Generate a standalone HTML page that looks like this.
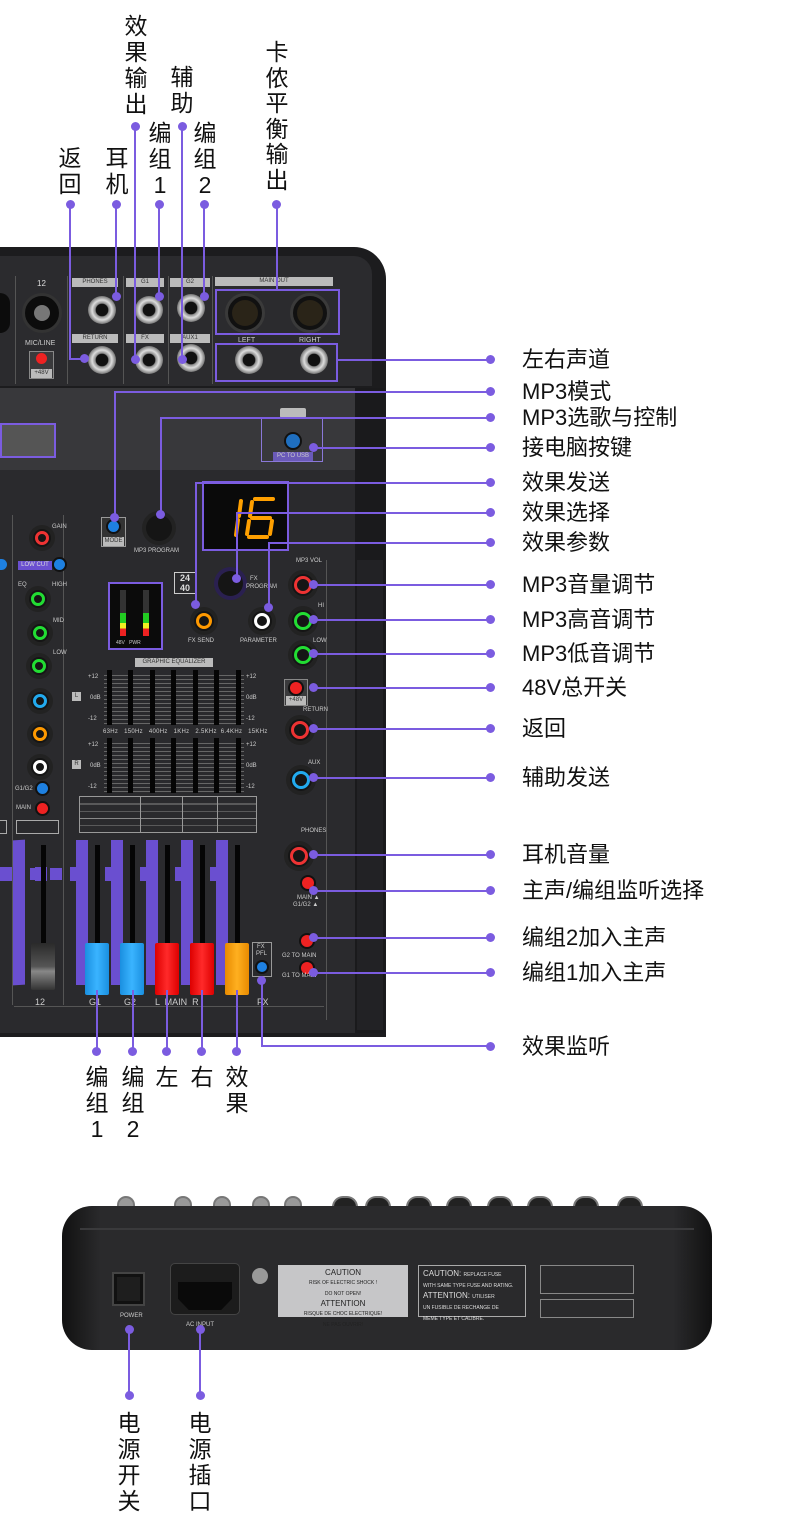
<!DOCTYPE html>
<html><head><meta charset="utf-8">
<style>
*{margin:0;padding:0;box-sizing:border-box}
body{width:790px;height:1540px;background:#fff;position:relative;overflow:hidden;font-family:"Liberation Sans","Noto Sans CJK SC",sans-serif}
.a{position:absolute}
.lbl{position:absolute;left:522px;font-size:22px;color:#111;line-height:26px;white-space:nowrap}
.v{position:absolute;font-size:23px;color:#111;line-height:26px;width:26px;text-align:center}
.hl{position:absolute;height:2px;background:#7b5ce0}
.vl{position:absolute;width:2px;background:#7b5ce0}
.dot{position:absolute;width:9px;height:9px;border-radius:50%;background:#7b5ce0}
.knob{position:absolute;border-radius:50%;background:#151515;box-shadow:0 0 0 4px #222}
.ring{position:absolute;border-radius:50%;border:3px solid}
.jack{position:absolute;border-radius:50%;background:radial-gradient(circle,#111 30%,#8a8a8a 34%,#ddd 50%,#777 70%,#444 75%)}
.t{position:absolute;color:#ccc;font-size:6px;white-space:nowrap}
.tag{position:absolute;background:#bbb;color:#333;font-size:6px;text-align:center;line-height:9px;height:9px}
.pb{position:absolute;border:2px solid #7b5ce0}
.cap{position:absolute;width:24px;height:52px;border-radius:2px}
.fd{position:absolute;width:5px;background:#050505}
.pbar{position:absolute;width:12px;background:#6a4fd0}
.rj{position:absolute;top:1196px;width:22px;height:14px;border-radius:11px 11px 0 0;background:#444;border:2px solid #777;border-bottom:0}
</style></head><body>

<!-- MIXER BODY -->
<div class="a" style="left:0;top:247px;width:386px;height:790px;background:#1c1c1e;border-top-right-radius:32px"></div>
<div class="a" style="left:0;top:256px;width:372px;height:130px;background:#2b2b2e;border-top-right-radius:18px"></div>
<div class="a" style="left:0;top:388px;width:355px;height:82px;background:#38383b"></div>
<div class="a" style="left:0;top:470px;width:355px;height:563px;background:#2a2a2d"></div>
<div class="a" style="left:355px;top:388px;width:30px;height:645px;background:#1a1a1c"></div>
<div class="a" style="left:357px;top:560px;width:26px;height:470px;background:#222225"></div>
<div class="a" style="left:326px;top:560px;width:1px;height:460px;background:#555"></div>

<!-- top panel details -->
<div class="a" style="left:15px;top:276px;width:1px;height:108px;background:#555"></div>
<div class="a" style="left:67px;top:276px;width:1px;height:108px;background:#555"></div>
<div class="a" style="left:123px;top:276px;width:1px;height:108px;background:#555"></div>
<div class="a" style="left:168px;top:276px;width:1px;height:108px;background:#555"></div>
<div class="a" style="left:212px;top:276px;width:1px;height:108px;background:#555"></div>
<div class="tag" style="left:20px;top:279px;width:43px;background:none;color:#ddd;font-size:8px">12</div>
<div class="a" style="left:22px;top:293px;width:40px;height:40px;border-radius:50%;background:#0c0c0c;border:3px solid #333"></div>
<div class="a" style="left:34px;top:305px;width:16px;height:16px;border-radius:50%;background:#777"></div>
<div class="a" style="left:0;top:293px;width:10px;height:40px;border-radius:0 20px 20px 0;background:#0c0c0c"></div>
<div class="t" style="left:25px;top:340px;font-size:7px">MIC/LINE</div>
<div class="a" style="left:29px;top:351px;width:25px;height:28px;background:#3a3a3c;border:1px solid #888"></div>
<div class="a" style="left:36px;top:353px;width:11px;height:11px;border-radius:50%;background:#e22"></div>
<div class="tag" style="left:31px;top:369px;width:21px">+48V</div>
<div class="tag" style="left:72px;top:278px;width:46px">PHONES</div>
<div class="tag" style="left:72px;top:334px;width:46px">RETURN</div>
<div class="tag" style="left:126px;top:278px;width:38px">G1</div>
<div class="tag" style="left:126px;top:334px;width:38px">FX</div>
<div class="tag" style="left:170px;top:278px;width:40px">G2</div>
<div class="tag" style="left:170px;top:334px;width:40px">AUX1</div>
<div class="tag" style="left:215px;top:277px;width:118px">MAIN OUT</div>
<div class="jack" style="left:88px;top:296px;width:28px;height:28px"></div>
<div class="jack" style="left:88px;top:346px;width:28px;height:28px"></div>
<div class="jack" style="left:135px;top:296px;width:28px;height:28px"></div>
<div class="jack" style="left:135px;top:346px;width:28px;height:28px"></div>
<div class="jack" style="left:177px;top:294px;width:28px;height:28px"></div>
<div class="jack" style="left:177px;top:344px;width:28px;height:28px"></div>
<div class="a" style="left:225px;top:293px;width:40px;height:40px;border-radius:50%;background:#111;border:3px solid #3a3a3a"></div>
<div class="a" style="left:232px;top:300px;width:26px;height:26px;border-radius:50%;background:#2a2418"></div>
<div class="a" style="left:290px;top:293px;width:40px;height:40px;border-radius:50%;background:#111;border:3px solid #3a3a3a"></div>
<div class="a" style="left:297px;top:300px;width:26px;height:26px;border-radius:50%;background:#2a2418"></div>
<div class="t" style="left:238px;top:337px;font-size:7px">LEFT</div>
<div class="t" style="left:299px;top:337px;font-size:7px">RIGHT</div>
<div class="jack" style="left:235px;top:346px;width:28px;height:28px"></div>
<div class="jack" style="left:300px;top:346px;width:28px;height:28px"></div>
<div class="pb" style="left:215px;top:289px;width:125px;height:46px"></div>
<div class="pb" style="left:215px;top:343px;width:123px;height:39px"></div>

<!-- upper gray section -->
<div class="a" style="left:0;top:423px;width:56px;height:35px;background:#555;border:2px solid #7b5ce0"></div>
<div class="a" style="left:280px;top:408px;width:26px;height:10px;background:#bbb;border-radius:2px"></div>
<div class="a" style="left:261px;top:417px;width:62px;height:45px;border:1px solid #8a78d8"></div>
<div class="a" style="left:286px;top:434px;width:14px;height:14px;border-radius:50%;background:#1f6fc0;box-shadow:0 0 0 2px #111"></div>
<div class="tag" style="left:273px;top:452px;width:40px;background:#6a5ab8;color:#ccc">PC TO USB</div>

<!-- MODE / MP3 program -->
<div class="a" style="left:101px;top:517px;width:25px;height:30px;background:#333;border:1px solid #999"></div>
<div class="a" style="left:108px;top:521px;width:11px;height:11px;border-radius:50%;background:#1e80e0;box-shadow:0 0 0 2px #111"></div>
<div class="tag" style="left:103px;top:537px;width:21px">MODE</div>
<div class="knob" style="left:146px;top:515px;width:26px;height:26px"></div>
<div class="t" style="left:134px;top:548px">MP3 PROGRAM</div>

<!-- display -->
<div class="a" style="left:202px;top:481px;width:87px;height:70px;border:2px solid #7b5ce0;background:#0a0a0a"></div>
<svg class="a" style="left:202px;top:481px" width="87" height="70" viewBox="0 0 87 70">
<g stroke="#ffa000" stroke-width="4" stroke-linecap="round" fill="none">
<line x1="39" y1="20" x2="37" y2="35"/><line x1="36" y1="39" x2="34" y2="54"/>
<line x1="53" y1="18" x2="71" y2="18"/><line x1="50" y1="21" x2="48" y2="35"/>
<line x1="50" y1="37" x2="68" y2="37"/><line x1="47" y1="40" x2="45" y2="53"/>
<line x1="47" y1="56" x2="65" y2="56"/><line x1="70" y1="40" x2="68" y2="53"/>
</g></svg>
<div class="a" style="left:174px;top:572px;width:22px;height:22px;border:1px solid #ccc;color:#ddd;font-size:9px;font-weight:bold;line-height:10px;text-align:center">24<br>40</div>
<div class="knob" style="left:218px;top:571px;width:25px;height:25px;box-shadow:0 0 0 4px #2a2050"></div>
<div class="t" style="left:250px;top:576px">FX</div>
<div class="t" style="left:246px;top:584px">PROGRAM</div>
<div class="knob" style="left:194px;top:611px;width:20px;height:20px"></div>
<div class="ring" style="left:196px;top:613px;width:16px;height:16px;border-color:#f90"></div>
<div class="t" style="left:188px;top:638px">FX SEND</div>
<div class="knob" style="left:252px;top:611px;width:20px;height:20px"></div>
<div class="ring" style="left:254px;top:613px;width:16px;height:16px;border-color:#fff"></div>
<div class="t" style="left:240px;top:638px">PARAMETER</div>

<!-- meter -->
<div class="a" style="left:108px;top:582px;width:55px;height:68px;border:2px solid #7b5ce0;background:#0b0b0b"></div>
<div class="a" style="left:120px;top:590px;width:6px;height:46px;background:linear-gradient(#333 0,#333 50%,#2c2 50%,#2c2 72%,#ee2 72%,#ee2 84%,#e22 84%)"></div>
<div class="a" style="left:143px;top:590px;width:6px;height:46px;background:linear-gradient(#333 0,#333 50%,#2c2 50%,#2c2 72%,#ee2 72%,#ee2 84%,#e22 84%)"></div>
<div class="t" style="left:116px;top:640px;font-size:5px">48V &nbsp; PWR</div>

<!-- right knobs -->
<div class="t" style="left:296px;top:558px">MP3 VOL</div>
<div class="knob" style="left:292px;top:574px;width:22px;height:22px"></div>
<div class="ring" style="left:294px;top:576px;width:18px;height:18px;border-color:#e33"></div>
<div class="t" style="left:318px;top:603px">HI</div>
<div class="knob" style="left:292px;top:610px;width:22px;height:22px"></div>
<div class="ring" style="left:294px;top:612px;width:18px;height:18px;border-color:#2d3"></div>
<div class="t" style="left:313px;top:638px">LOW</div>
<div class="knob" style="left:292px;top:644px;width:22px;height:22px"></div>
<div class="ring" style="left:294px;top:646px;width:18px;height:18px;border-color:#2d3"></div>
<div class="a" style="left:284px;top:679px;width:24px;height:27px;background:#3a3a3c;border:1px solid #888"></div>
<div class="a" style="left:290px;top:682px;width:12px;height:12px;border-radius:50%;background:#e22;box-shadow:0 0 0 2px #111"></div>
<div class="tag" style="left:286px;top:696px;width:20px">+48V</div>
<div class="t" style="left:303px;top:707px">RETURN</div>
<div class="knob" style="left:289px;top:719px;width:22px;height:22px"></div>
<div class="ring" style="left:291px;top:721px;width:18px;height:18px;border-color:#e33"></div>
<div class="t" style="left:308px;top:760px">AUX</div>
<div class="knob" style="left:290px;top:769px;width:22px;height:22px"></div>
<div class="ring" style="left:292px;top:771px;width:18px;height:18px;border-color:#2ae"></div>
<div class="t" style="left:301px;top:828px">PHONES</div>
<div class="knob" style="left:288px;top:845px;width:22px;height:22px"></div>
<div class="ring" style="left:290px;top:847px;width:18px;height:18px;border-color:#e33"></div>
<div class="a" style="left:302px;top:877px;width:12px;height:12px;border-radius:50%;background:#e22;box-shadow:0 0 0 2px #111"></div>
<div class="t" style="left:297px;top:895px">MAIN ▲</div>
<div class="t" style="left:293px;top:902px">G1/G2 ▲</div>
<div class="a" style="left:301px;top:935px;width:12px;height:12px;border-radius:50%;background:#e22;box-shadow:0 0 0 2px #111"></div>
<div class="t" style="left:282px;top:953px">G2 TO MAIN</div>
<div class="a" style="left:301px;top:962px;width:12px;height:12px;border-radius:50%;background:#e22;box-shadow:0 0 0 2px #111"></div>
<div class="t" style="left:282px;top:973px">G1 TO MAIN</div>

<!-- left channel knobs -->
<div class="a" style="left:12px;top:515px;width:1px;height:490px;background:#555"></div>
<div class="a" style="left:63px;top:515px;width:1px;height:490px;background:#555"></div>
<div class="t" style="left:52px;top:524px">GAIN</div>
<div class="knob" style="left:33px;top:529px;width:18px;height:18px"></div>
<div class="ring" style="left:35px;top:531px;width:14px;height:14px;border-color:#e33"></div>
<div class="tag" style="left:18px;top:561px;width:34px;background:#6a4fd0;color:#ddd">LOW CUT</div>
<div class="a" style="left:54px;top:559px;width:11px;height:11px;border-radius:50%;background:#1e80e0;box-shadow:0 0 0 2px #111"></div>
<div class="a" style="left:0;top:559px;width:7px;height:11px;border-radius:0 6px 6px 0;background:#1e80e0"></div>
<div class="t" style="left:18px;top:582px">EQ</div><div class="t" style="left:52px;top:582px">HIGH</div>
<div class="knob" style="left:29px;top:590px;width:18px;height:18px"></div>
<div class="ring" style="left:31px;top:592px;width:14px;height:14px;border-color:#2d3"></div>
<div class="t" style="left:53px;top:618px">MID</div>
<div class="knob" style="left:31px;top:624px;width:18px;height:18px"></div>
<div class="ring" style="left:33px;top:626px;width:14px;height:14px;border-color:#2d3"></div>
<div class="t" style="left:53px;top:650px">LOW</div>
<div class="knob" style="left:30px;top:657px;width:18px;height:18px"></div>
<div class="ring" style="left:32px;top:659px;width:14px;height:14px;border-color:#2d3"></div>
<div class="knob" style="left:31px;top:692px;width:18px;height:18px"></div>
<div class="ring" style="left:33px;top:694px;width:14px;height:14px;border-color:#2ae"></div>
<div class="knob" style="left:31px;top:725px;width:18px;height:18px"></div>
<div class="ring" style="left:33px;top:727px;width:14px;height:14px;border-color:#f90"></div>
<div class="knob" style="left:31px;top:758px;width:18px;height:18px"></div>
<div class="ring" style="left:33px;top:760px;width:14px;height:14px;border-color:#fff"></div>
<div class="t" style="left:15px;top:786px">G1/G2</div>
<div class="a" style="left:37px;top:783px;width:11px;height:11px;border-radius:50%;background:#1e80e0;box-shadow:0 0 0 2px #111"></div>
<div class="t" style="left:16px;top:805px">MAIN</div>
<div class="a" style="left:37px;top:803px;width:11px;height:11px;border-radius:50%;background:#e22;box-shadow:0 0 0 2px #111"></div>
<div class="a" style="left:16px;top:820px;width:43px;height:14px;border:1px solid #aaa"></div>
<div class="a" style="left:0;top:820px;width:7px;height:14px;border:1px solid #aaa;border-left:0"></div>

<!-- EQ -->
<div class="tag" style="left:135px;top:658px;width:78px">GRAPHIC EQUALIZER</div>
<div class="tag" style="left:72px;top:692px;width:9px;height:9px">L</div>
<div class="tag" style="left:72px;top:760px;width:9px;height:9px">R</div>
<div class="t" style="left:88px;top:674px">+12</div><div class="t" style="left:90px;top:695px">0dB</div><div class="t" style="left:88px;top:716px">-12</div>
<div class="t" style="left:246px;top:674px">+12</div><div class="t" style="left:246px;top:695px">0dB</div><div class="t" style="left:246px;top:716px">-12</div>
<div class="t" style="left:88px;top:742px">+12</div><div class="t" style="left:90px;top:763px">0dB</div><div class="t" style="left:88px;top:784px">-12</div>
<div class="t" style="left:246px;top:742px">+12</div><div class="t" style="left:246px;top:763px">0dB</div><div class="t" style="left:246px;top:784px">-12</div>
<div class="a" style="left:104px;top:672px;width:140px;height:52px;background:repeating-linear-gradient(#2a2a2d 0 3px,#666 3px 4px)"></div>
<div class="a" style="left:104px;top:740px;width:140px;height:52px;background:repeating-linear-gradient(#2a2a2d 0 3px,#666 3px 4px)"></div>
<div class="fd" style="left:107px;top:670px;height:55px"></div><div class="fd" style="left:128px;top:670px;height:55px"></div><div class="fd" style="left:150px;top:670px;height:55px"></div><div class="fd" style="left:171px;top:670px;height:55px"></div><div class="fd" style="left:193px;top:670px;height:55px"></div><div class="fd" style="left:214px;top:670px;height:55px"></div><div class="fd" style="left:236px;top:670px;height:55px"></div>
<div class="fd" style="left:107px;top:738px;height:55px"></div><div class="fd" style="left:128px;top:738px;height:55px"></div><div class="fd" style="left:150px;top:738px;height:55px"></div><div class="fd" style="left:171px;top:738px;height:55px"></div><div class="fd" style="left:193px;top:738px;height:55px"></div><div class="fd" style="left:214px;top:738px;height:55px"></div><div class="fd" style="left:236px;top:738px;height:55px"></div>
<div class="t" style="left:103px;top:729px;letter-spacing:0.3px">63Hz &nbsp; 150Hz &nbsp; 400Hz &nbsp; 1KHz &nbsp; 2.5KHz &nbsp;6.4KHz &nbsp; 15KHz</div>
<div class="a" style="left:79px;top:796px;width:178px;height:37px;border:1px solid #999;background:repeating-linear-gradient(#2a2a2d 0 6.5px,#888 6.5px 7.3px)"></div>
<div class="a" style="left:140px;top:796px;width:1px;height:37px;background:#999"></div>
<div class="a" style="left:182px;top:796px;width:1px;height:37px;background:#999"></div>
<div class="a" style="left:217px;top:796px;width:1px;height:37px;background:#999"></div>

<!-- faders -->
<div class="pbar" style="left:13px;top:840px;height:145px;transform:skewY(-4deg)"></div>
<div class="pbar" style="left:76px;top:840px;height:145px"></div><div class="pbar" style="left:111px;top:840px;height:145px"></div><div class="pbar" style="left:146px;top:840px;height:145px"></div><div class="pbar" style="left:181px;top:840px;height:145px"></div><div class="pbar" style="left:216px;top:840px;height:145px"></div>
<div class="a" style="left:0;top:867px;width:245px;height:14px;background:repeating-linear-gradient(90deg,#6a4fd0 0 12px,transparent 12px 35px)"></div>
<div class="a" style="left:30px;top:868px;width:10px;height:12px;background:#6a4fd0"></div><div class="a" style="left:50px;top:868px;width:12px;height:12px;background:#6a4fd0"></div>
<div class="fd" style="left:41px;top:845px;height:125px"></div>
<div class="fd" style="left:95px;top:845px;height:100px"></div><div class="fd" style="left:130px;top:845px;height:100px"></div><div class="fd" style="left:165px;top:845px;height:100px"></div><div class="fd" style="left:200px;top:845px;height:100px"></div><div class="fd" style="left:235px;top:845px;height:100px"></div>
<div class="cap" style="left:31px;top:943px;width:24px;height:47px;background:linear-gradient(#2a2a2a,#555 50%,#888 60%,#333)"></div>
<div class="cap" style="left:85px;top:943px;background:linear-gradient(90deg,#1a8fe0,#3ab4ff 50%,#1a8fe0)"></div>
<div class="cap" style="left:120px;top:943px;background:linear-gradient(90deg,#1a8fe0,#3ab4ff 50%,#1a8fe0)"></div>
<div class="cap" style="left:155px;top:943px;background:linear-gradient(90deg,#d00,#ff2a2a 50%,#d00)"></div>
<div class="cap" style="left:190px;top:943px;background:linear-gradient(90deg,#d00,#ff2a2a 50%,#d00)"></div>
<div class="cap" style="left:225px;top:943px;background:linear-gradient(90deg,#e88a00,#ffb020 50%,#e88a00)"></div>
<div class="a" style="left:252px;top:942px;width:20px;height:35px;border:1px solid #999"></div>
<div class="t" style="left:257px;top:944px">FX</div><div class="t" style="left:256px;top:951px">PFL</div>
<div class="a" style="left:257px;top:962px;width:10px;height:10px;border-radius:50%;background:#1e80e0;box-shadow:0 0 0 2px #111"></div>
<div class="t" style="left:35px;top:997px;font-size:9px">12</div>
<div class="t" style="left:89px;top:997px;font-size:9px">G1</div>
<div class="t" style="left:124px;top:997px;font-size:9px">G2</div>
<div class="t" style="left:155px;top:997px;font-size:9px">L &nbsp;MAIN &nbsp;R</div>
<div class="t" style="left:257px;top:997px;font-size:9px">FX</div>
<div class="a" style="left:14px;top:1006px;width:310px;height:1px;background:#555"></div>

<!-- RIGHT LABELS & LINES -->
<div class="hl" style="left:338px;top:359px;width:152px"></div>
<div class="hl" style="left:114px;top:391px;width:376px"></div><div class="vl" style="left:114px;top:391px;height:127px"></div>
<div class="hl" style="left:160px;top:417px;width:330px"></div><div class="vl" style="left:160px;top:417px;height:97px"></div>
<div class="hl" style="left:313px;top:447px;width:177px"></div>
<div class="hl" style="left:195px;top:482px;width:295px"></div><div class="vl" style="left:195px;top:482px;height:122px"></div>
<div class="hl" style="left:236px;top:512px;width:254px"></div><div class="vl" style="left:236px;top:512px;height:66px"></div>
<div class="hl" style="left:268px;top:542px;width:222px"></div><div class="vl" style="left:268px;top:542px;height:65px"></div>
<div class="hl" style="left:313px;top:584px;width:177px"></div>
<div class="hl" style="left:313px;top:619px;width:177px"></div>
<div class="hl" style="left:313px;top:653px;width:177px"></div>
<div class="hl" style="left:313px;top:687px;width:177px"></div>
<div class="hl" style="left:313px;top:728px;width:177px"></div>
<div class="hl" style="left:313px;top:777px;width:177px"></div>
<div class="hl" style="left:313px;top:854px;width:177px"></div>
<div class="hl" style="left:313px;top:890px;width:177px"></div>
<div class="hl" style="left:313px;top:937px;width:177px"></div>
<div class="hl" style="left:313px;top:972px;width:177px"></div>
<div class="vl" style="left:261px;top:980px;height:67px"></div><div class="hl" style="left:261px;top:1045px;width:229px"></div>
<div class="dot" style="left:486px;top:355px"></div><div class="dot" style="left:486px;top:387px"></div><div class="dot" style="left:486px;top:413px"></div><div class="dot" style="left:486px;top:443px"></div><div class="dot" style="left:486px;top:478px"></div><div class="dot" style="left:486px;top:508px"></div><div class="dot" style="left:486px;top:538px"></div><div class="dot" style="left:486px;top:580px"></div><div class="dot" style="left:486px;top:615px"></div><div class="dot" style="left:486px;top:649px"></div><div class="dot" style="left:486px;top:683px"></div><div class="dot" style="left:486px;top:724px"></div><div class="dot" style="left:486px;top:773px"></div><div class="dot" style="left:486px;top:850px"></div><div class="dot" style="left:486px;top:886px"></div><div class="dot" style="left:486px;top:933px"></div><div class="dot" style="left:486px;top:968px"></div><div class="dot" style="left:486px;top:1042px"></div>
<div class="dot" style="left:110px;top:513px"></div><div class="dot" style="left:156px;top:510px"></div><div class="dot" style="left:309px;top:443px"></div><div class="dot" style="left:191px;top:600px"></div><div class="dot" style="left:232px;top:574px"></div><div class="dot" style="left:264px;top:603px"></div>
<div class="dot" style="left:309px;top:580px"></div><div class="dot" style="left:309px;top:615px"></div><div class="dot" style="left:309px;top:649px"></div><div class="dot" style="left:309px;top:683px"></div><div class="dot" style="left:309px;top:724px"></div><div class="dot" style="left:309px;top:773px"></div><div class="dot" style="left:309px;top:850px"></div><div class="dot" style="left:309px;top:886px"></div><div class="dot" style="left:309px;top:933px"></div><div class="dot" style="left:309px;top:968px"></div><div class="dot" style="left:257px;top:976px"></div>

<div class="lbl" style="top:347px">左右声道</div>
<div class="lbl" style="top:379px">MP3模式</div>
<div class="lbl" style="top:405px">MP3选歌与控制</div>
<div class="lbl" style="top:435px">接电脑按键</div>
<div class="lbl" style="top:470px">效果发送</div>
<div class="lbl" style="top:500px">效果选择</div>
<div class="lbl" style="top:530px">效果参数</div>
<div class="lbl" style="top:572px">MP3音量调节</div>
<div class="lbl" style="top:607px">MP3高音调节</div>
<div class="lbl" style="top:641px">MP3低音调节</div>
<div class="lbl" style="top:675px">48V总开关</div>
<div class="lbl" style="top:716px">返回</div>
<div class="lbl" style="top:765px">辅助发送</div>
<div class="lbl" style="top:842px">耳机音量</div>
<div class="lbl" style="top:878px">主声/编组监听选择</div>
<div class="lbl" style="top:925px">编组2加入主声</div>
<div class="lbl" style="top:960px">编组1加入主声</div>
<div class="lbl" style="top:1034px">效果监听</div>

<!-- TOP LABELS -->
<div class="v" style="left:57px;top:145px">返回</div>
<div class="v" style="left:104px;top:145px">耳机</div>
<div class="v" style="left:123px;top:13px">效果输出</div>
<div class="v" style="left:147px;top:120px">编组1</div>
<div class="v" style="left:169px;top:64px">辅助</div>
<div class="v" style="left:192px;top:120px">编组2</div>
<div class="v" style="left:264px;top:40px;line-height:25.5px">卡侬平衡输出</div>
<div class="dot" style="left:66px;top:200px"></div><div class="vl" style="left:69px;top:204px;height:155px"></div><div class="hl" style="left:69px;top:358px;width:15px"></div><div class="dot" style="left:80px;top:354px"></div>
<div class="dot" style="left:112px;top:200px"></div><div class="vl" style="left:115px;top:204px;height:92px"></div><div class="dot" style="left:112px;top:292px"></div>
<div class="dot" style="left:131px;top:122px"></div><div class="vl" style="left:134px;top:126px;height:233px"></div><div class="dot" style="left:131px;top:355px"></div>
<div class="dot" style="left:155px;top:200px"></div><div class="vl" style="left:158px;top:204px;height:92px"></div><div class="dot" style="left:155px;top:292px"></div>
<div class="dot" style="left:178px;top:122px"></div><div class="vl" style="left:181px;top:126px;height:233px"></div><div class="dot" style="left:178px;top:355px"></div>
<div class="dot" style="left:200px;top:200px"></div><div class="vl" style="left:203px;top:204px;height:92px"></div><div class="dot" style="left:200px;top:292px"></div>
<div class="dot" style="left:272px;top:200px"></div><div class="vl" style="left:276px;top:204px;height:86px"></div>

<!-- BOTTOM FADER LABELS -->
<div class="vl" style="left:96px;top:990px;height:60px"></div><div class="vl" style="left:132px;top:990px;height:60px"></div><div class="vl" style="left:166px;top:990px;height:60px"></div><div class="vl" style="left:201px;top:990px;height:60px"></div><div class="vl" style="left:236px;top:990px;height:60px"></div>
<div class="dot" style="left:92px;top:1047px"></div><div class="dot" style="left:128px;top:1047px"></div><div class="dot" style="left:162px;top:1047px"></div><div class="dot" style="left:197px;top:1047px"></div><div class="dot" style="left:232px;top:1047px"></div>
<div class="v" style="left:84px;top:1064px">编组1</div>
<div class="v" style="left:120px;top:1064px">编组2</div>
<div class="v" style="left:154px;top:1064px">左</div>
<div class="v" style="left:189px;top:1064px">右</div>
<div class="v" style="left:224px;top:1064px">效果</div>

<!-- REAR DEVICE -->
<div class="rj" style="left:117px;width:18px;background:#999"></div>
<div class="rj" style="left:174px;width:18px;background:#999"></div>
<div class="rj" style="left:213px;width:18px;background:#999"></div>
<div class="rj" style="left:252px;width:18px;background:#999"></div>
<div class="rj" style="left:284px;width:18px;background:#999"></div>
<div class="rj" style="left:332px;width:26px;background:#222"></div>
<div class="rj" style="left:365px;width:26px;background:#222"></div>
<div class="rj" style="left:406px;width:26px;background:#222"></div>
<div class="rj" style="left:446px;width:26px;background:#222"></div>
<div class="rj" style="left:487px;width:26px;background:#222"></div>
<div class="rj" style="left:527px;width:26px;background:#222"></div>
<div class="rj" style="left:573px;width:26px;background:#222"></div>
<div class="rj" style="left:617px;width:26px;background:#222"></div>
<div class="a" style="left:62px;top:1206px;width:650px;height:144px;background:linear-gradient(90deg,#111,#2a2a2c 6%,#2a2a2c 94%,#111);border-radius:30px"></div>
<div class="a" style="left:80px;top:1228px;width:614px;height:2px;background:#3a3a3c"></div>
<div class="a" style="left:112px;top:1272px;width:33px;height:34px;background:#111;border:2px solid #444"></div>
<div class="a" style="left:117px;top:1277px;width:23px;height:24px;background:#1e1e1e"></div>
<div class="t" style="left:120px;top:1313px">POWER</div>
<div class="a" style="left:170px;top:1263px;width:70px;height:52px;background:#1c1c1c;border-radius:5px;border:1px solid #444"></div>
<div class="a" style="left:178px;top:1282px;width:54px;height:28px;background:#0a0a0a;clip-path:polygon(0 0,100% 0,100% 60%,80% 100%,20% 100%,0 60%)"></div>
<div class="t" style="left:186px;top:1322px">AC INPUT</div>
<div class="a" style="left:252px;top:1268px;width:16px;height:16px;border-radius:50%;background:#999"></div>
<div class="a" style="left:278px;top:1265px;width:130px;height:52px;background:#c6c6c8"></div>
<div class="a" style="left:278px;top:1268px;width:130px;text-align:center;font-size:8px;color:#222;line-height:9px">CAUTION<br><span style="font-size:5px">RISK OF ELECTRIC SHOCK !<br>DO NOT OPEN!</span><br>ATTENTION<br><span style="font-size:5px">RISQUE DE CHOC ELECTRIQUE!<br>NE PAS OUVRIR!</span></div>
<div class="a" style="left:418px;top:1265px;width:108px;height:52px;border:1px solid #aaa;color:#ddd;font-size:8px;line-height:9px;padding:3px 4px">CAUTION: <span style="font-size:5px">REPLACE FUSE<br>WITH SAME TYPE FUSE AND RATING.</span><br>ATTENTION: <span style="font-size:5px">UTILISER<br>UN FUSIBLE DE RECHANGE DE<br>MEME TYPE ET CALIBRE.</span></div>
<div class="a" style="left:540px;top:1265px;width:94px;height:29px;border:1px solid #888"></div>
<div class="a" style="left:540px;top:1299px;width:94px;height:19px;border:1px solid #888"></div>
<div class="dot" style="left:125px;top:1325px"></div><div class="vl" style="left:128px;top:1328px;height:68px"></div><div class="dot" style="left:125px;top:1391px"></div>
<div class="dot" style="left:196px;top:1325px"></div><div class="vl" style="left:199px;top:1328px;height:68px"></div><div class="dot" style="left:196px;top:1391px"></div>
<div class="v" style="left:116px;top:1410px">电源开关</div>
<div class="v" style="left:187px;top:1410px">电源插口</div>
</body></html>
